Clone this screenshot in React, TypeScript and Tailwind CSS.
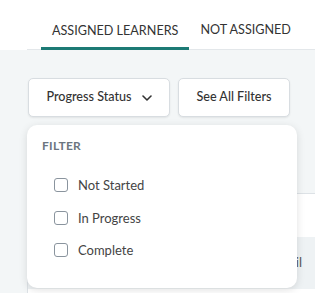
import { useState } from 'react'

const statuses = ['Not Started', 'In Progress', 'Complete']

function Chevron() {
  return (
    <svg width="10" height="6" viewBox="0 0 10 6" fill="none">
      <path d="M1 1l4 4 4-4" stroke="currentColor" strokeWidth="1.6" strokeLinecap="round" strokeLinejoin="round" />
    </svg>
  )
}

export default function App() {
  const [checked, setChecked] = useState<Record<string, boolean>>({})

  return (
    <div className="relative w-[315px] h-[293px] overflow-hidden bg-[#f3f6f7] font-['Lato','Noto_Sans',sans-serif] text-[#333]">
      {/* tabs */}
      <div className="h-[50px] bg-white flex items-end">
        <div className="ml-[27px] flex-1 flex items-end border-b border-[#e3e7ea] pl-[14px] whitespace-nowrap">
          <div className="px-[11px] pb-[8px] border-b-[3px] border-[#1c7a75] mb-[-1px] text-[12.6px] leading-[17px]">
            ASSIGNED LEARNERS
          </div>
          <div className="px-[11px] pb-[11px] text-[12.6px] leading-[17px]">
            NOT ASSIGNED
          </div>
        </div>
      </div>

      {/* filter buttons */}
      <div className="flex gap-[8px] pl-[28px] pt-[28px]">
        <button className="h-[39px] w-[142px] flex items-center justify-center gap-[10px] bg-white border border-[#d8dde1] rounded-[5px] shadow-[0_1px_2px_rgba(0,0,0,0.08)] text-[12.6px] font-medium">
          Progress Status
          <Chevron />
        </button>
        <button className="h-[39px] w-[112px] flex items-center justify-center bg-white border border-[#d8dde1] rounded-[5px] shadow-[0_1px_2px_rgba(0,0,0,0.08)] text-[12.6px] font-medium">
          See All Filters
        </button>
      </div>

      {/* table behind */}
      <div className="ml-[27px] mt-[76px] border-t border-l border-[#dde2e6] bg-white h-[200px]">
        <div className="h-[43px]" />
        <div className="h-[52px] bg-[#eef2f4] flex items-center justify-end pr-[13px] text-[13px] text-[#555]">
          Email
        </div>
      </div>

      {/* dropdown */}
      <div className="absolute left-[27px] top-[125px] w-[270px] h-[163px] bg-white rounded-[10px] shadow-[0_2px_8px_rgba(0,0,0,0.12)] px-[15px] pt-[14px]">
        <div className="text-[12px] font-bold text-[#6b7580] tracking-[0.3px] leading-[14px]">FILTER</div>
        <div className="mt-[23px] flex flex-col gap-[14.5px] pl-[12px]">
          {statuses.map(s => (
            <label key={s} className="flex items-center gap-[10px] text-[13px] leading-[18px] text-[#444] cursor-pointer">
              <input
                type="checkbox"
                checked={!!checked[s]}
                onChange={() => setChecked(c => ({ ...c, [s]: !c[s] }))}
                className="appearance-none w-[14px] h-[14px] rounded-[3px] border border-[#8a949e] bg-white checked:bg-[#1c7a75] checked:border-[#1c7a75]"
              />
              {s}
            </label>
          ))}
        </div>
      </div>
    </div>
  )
}
